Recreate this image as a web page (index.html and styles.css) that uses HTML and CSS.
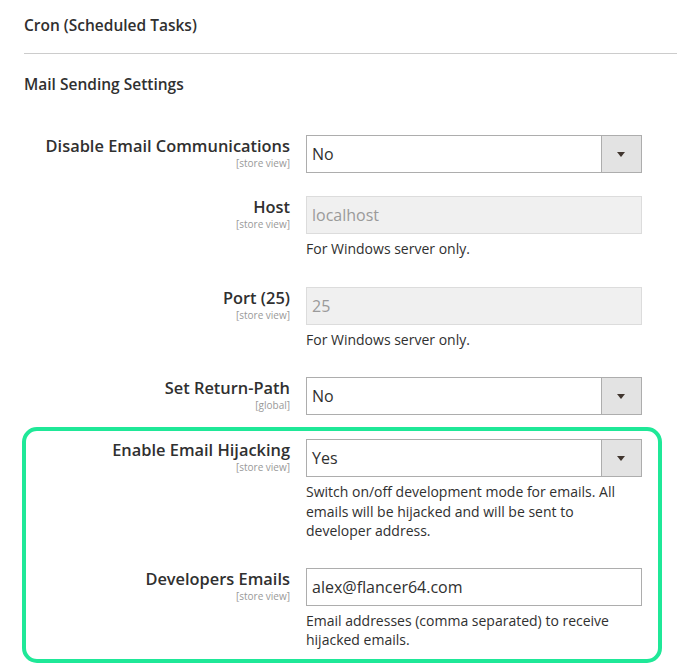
FILE: index.html
```html
<!DOCTYPE html>
<html>
<head>
<meta charset="utf-8">
<link rel="stylesheet" href="styles.css">
</head>
<body>
<div class="page">
  <div class="section-title first">Cron (Scheduled Tasks)</div>
  <div class="section-title second">Mail Sending Settings</div>

  <div class="fields">
    <div class="row">
      <div class="label"><span class="name">Disable Email Communications</span><span class="scope">[store view]</span></div>
      <div class="control">
        <div class="select"><span class="value">No</span><span class="arrow"></span></div>
      </div>
    </div>

    <div class="row">
      <div class="label"><span class="name">Host</span><span class="scope">[store view]</span></div>
      <div class="control">
        <div class="input disabled">localhost</div>
        <div class="note">For Windows server only.</div>
      </div>
    </div>

    <div class="row">
      <div class="label"><span class="name">Port (25)</span><span class="scope">[store view]</span></div>
      <div class="control">
        <div class="input disabled">25</div>
        <div class="note">For Windows server only.</div>
      </div>
    </div>

    <div class="row">
      <div class="label"><span class="name">Set Return-Path</span><span class="scope">[global]</span></div>
      <div class="control">
        <div class="select"><span class="value">No</span><span class="arrow"></span></div>
      </div>
    </div>
  </div>

  <div class="highlight">
    <div class="row">
      <div class="label"><span class="name">Enable Email Hijacking</span><span class="scope">[store view]</span></div>
      <div class="control">
        <div class="select"><span class="value">Yes</span><span class="arrow"></span></div>
        <div class="note">Switch on/off development mode for emails. All emails will be hijacked and will be sent to developer address.</div>
      </div>
    </div>

    <div class="row">
      <div class="label"><span class="name">Developers Emails</span><span class="scope">[store view]</span></div>
      <div class="control">
        <div class="input">alex@flancer64.com</div>
        <div class="note">Email addresses (comma separated) to receive hijacked emails.</div>
      </div>
    </div>
  </div>
</div>
</body>
</html>
```
FILE: styles.css
```css
* { box-sizing: border-box; }
html, body { margin: 0; padding: 0; background: #fff; }
body {
  font-family: "Open Sans", "Noto Sans", "Liberation Sans", sans-serif;
  color: #303030;
}
.page { width: 677px; height: 671px; overflow: hidden; }

.section-title {
  margin-left: 24px;
  font-size: 15.5px;
  font-weight: 600;
  line-height: 22px;
  color: #303030;
}
.section-title.first {
  padding-top: 14px;
  height: 54px;
  border-bottom: 1px solid #cccccc;
}
.section-title.second {
  padding-top: 19px;
}

.fields { margin-top: 40px; }

.row {
  display: grid;
  grid-template-columns: 290px 336px;
  column-gap: 16px;
  margin-bottom: 23px;
}
.row:last-child { margin-bottom: 0; }

.label {
  display: flex;
  flex-direction: column;
  align-items: flex-end;
  text-align: right;
}
.label .name {
  font-size: 16.4px;
  font-weight: 600;
  line-height: 22px;
  color: #303030;
}
.label .scope {
  font-size: 10px;
  line-height: 12px;
  color: #999999;
}

.select, .input {
  height: 38px;
  border: 1px solid #adadad;
  background: #fff;
  display: flex;
  align-items: center;
  font-size: 16px;
  color: #303030;
}
.select .value { flex: 1; padding-left: 5px; }
.select .arrow {
  width: 40px;
  height: 100%;
  background: #e3e3e3;
  border-left: 1px solid #adadad;
  position: relative;
}
.select .arrow::after {
  content: "";
  position: absolute;
  left: 15px;
  top: 16px;
  border-left: 4.5px solid transparent;
  border-right: 4.5px solid transparent;
  border-top: 5px solid #41362f;
}
.input { padding-left: 5px; }
.input.disabled {
  background: #f0f0f0;
  border-color: #dcdcdc;
  color: #9a9a9a;
}

.note {
  margin-top: 5px;
  margin-bottom: 5px;
  font-size: 14px;
  line-height: 19.5px;
  color: #303030;
}

.highlight {
  margin-left: 22px;
  width: 640px;
  margin-top: 12px;
  border: 4px solid #1fe898;
  border-radius: 15px;
  padding-top: 8px;
  padding-bottom: 4px;
}
.highlight .row { grid-template-columns: 264px 336px; margin-bottom: 22px; }
.highlight .row:last-child { margin-bottom: 0; }
```
